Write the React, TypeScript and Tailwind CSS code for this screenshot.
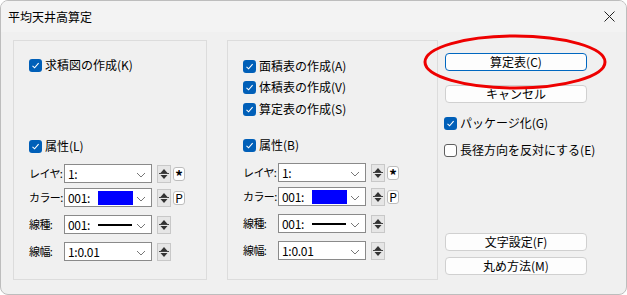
import React from 'react'

const font = { fontFamily: '"Noto Sans CJK JP", "Noto Sans", sans-serif' }

function Check({ checked = true, label }: { checked?: boolean; label: string }) {
  return (
    <div className="flex items-center gap-[3px] h-[18px]">
      {checked ? (
        <div className="w-[13px] h-[13px] rounded-[3px] bg-[#005fb8] flex items-center justify-center">
          <svg width="9" height="9" viewBox="0 0 9 9">
            <path d="M1.5 4.8 L3.6 6.8 L7.6 2.2" fill="none" stroke="#fff" strokeWidth="1.1" />
          </svg>
        </div>
      ) : (
        <div className="w-[13px] h-[13px] rounded-[3px] bg-white border border-[#5f5f5f]" />
      )}
      <span className="text-[12px] leading-none text-black whitespace-nowrap">{label}</span>
    </div>
  )
}

function Chevron() {
  return (
    <svg width="10" height="6" viewBox="0 0 10 6" className="absolute right-[5px] top-[7px]">
      <path d="M1 1 L5 5 L9 1" fill="none" stroke="#777" strokeWidth="1" />
    </svg>
  )
}

function Combo({ children }: { children: React.ReactNode }) {
  return (
    <div className="relative w-[88px] h-[19px] bg-white border border-[#8a8a8a] flex items-center pl-[3px] text-[12px] leading-none tracking-[-0.3px]">
      {children}
      <Chevron />
    </div>
  )
}

function Spinner() {
  return (
    <div className="ml-[5px] w-[14px] h-[18px] bg-[#e6e6e6] border border-[#c8c8c8] flex flex-col items-center justify-between py-[2px]">
      <svg width="8" height="5" viewBox="0 0 8 5">
        <path d="M0.5 5 L4 1 L7.5 5 Z" fill="#333" />
      </svg>
      <div className="w-[10px] h-px bg-[#444]" />
      <svg width="8" height="5" viewBox="0 0 8 5">
        <path d="M0.5 0 L4 4 L7.5 0 Z" fill="#333" />
      </svg>
    </div>
  )
}

function Mini({ ch }: { ch: string }) {
  return (
    <div className="ml-[2px] w-[12px] h-[14px] bg-white border border-[#bdbdbd] rounded-[3px] flex items-center justify-center text-[12px] leading-none">
      {ch === '*' ? <span className="text-[15px] font-bold leading-none mt-[4px]">*</span> : ch}
    </div>
  )
}

function Row({ label, children, extra, mt }: { label: string; children: React.ReactNode; extra?: string; mt: string }) {
  return (
    <div className={`flex items-center ${mt}`}>
      <span className="w-[35px] text-[11px] leading-none whitespace-nowrap tracking-[-0.6px]">{label}</span>
      <Combo>{children}</Combo>
      <Spinner />
      {extra && <Mini ch={extra} />}
    </div>
  )
}

function Attrs() {
  return (
    <>
      <Row label="レイヤ:" extra="*" mt="mt-[9px]">
        <span>1:</span>
      </Row>
      <Row label="カラー:" extra="P" mt="mt-[5px]">
        <span className="w-[30px]">001:</span>
        <div className="w-[35px] h-[14px] bg-[#0000ff]" />
      </Row>
      <Row label="線種:" mt="mt-[8px]">
        <span className="w-[30px]">001:</span>
        <div className="w-[34px] h-[2px] bg-black" />
      </Row>
      <Row label="線幅:" mt="mt-[8px]">
        <span>1:0.01</span>
      </Row>
    </>
  )
}

function Btn({ label, primary }: { label: string; primary?: boolean }) {
  return (
    <div
      className={`w-[142px] h-[18px] rounded-[4px] bg-[#fdfdfd] flex items-center justify-center text-[12px] leading-none ${
        primary ? 'border border-[#0067c0]' : 'border border-[#d0d0d0]'
      }`}
    >
      {label}
    </div>
  )
}

export default function App() {
  return (
    <div style={font} className="relative w-[627px] h-[295px] bg-white">
      <div className="w-[627px] h-[295px] rounded-[8px] border border-[#bdbdbd] overflow-hidden bg-[#f0f0f0] flex flex-col">
        <div className="h-[31px] bg-[#f3f3f3] flex items-center justify-between pl-[7px] pr-[11px] shrink-0">
          <span className="text-[12px] leading-none">平均天井高算定</span>
          <svg width="11" height="11" viewBox="0 0 11 11">
            <path d="M0.5 0.5 L10.5 10.5 M10.5 0.5 L0.5 10.5" stroke="#222" strokeWidth="1" />
          </svg>
        </div>
        <div className="flex pl-[12px] pt-[8px]">
          <div className="w-[194px] h-[240px] border border-[#dcdcdc] pl-[15px] pt-[15px] flex flex-col">
            <Check label="求積図の作成(K)" />
            <div className="mt-[63px]">
              <Check label="属性(L)" />
            </div>
            <Attrs />
          </div>
          <div className="ml-[20px] w-[211px] h-[240px] border border-[#dcdcdc] pl-[15px] pt-[16px] flex flex-col">
            <Check label="面積表の作成(A)" />
            <div className="mt-[3px]">
              <Check label="体積表の作成(V)" />
            </div>
            <div className="mt-[4px]">
              <Check label="算定表の作成(S)" />
            </div>
            <div className="mt-[18px]">
              <Check label="属性(B)" />
            </div>
            <Attrs />
          </div>
          <div className="ml-[7px] pt-[13px] flex flex-col">
            <Btn label="算定表(C)" primary />
            <div className="mt-[14px]">
              <Btn label="キャンセル" />
            </div>
            <div className="mt-[11px] -ml-[1px]">
              <Check label="パッケージ化(G)" />
            </div>
            <div className="mt-[9px] -ml-[1px]">
              <Check checked={false} label="長径方向を反対にする(E)" />
            </div>
            <div className="mt-[74px]">
              <Btn label="文字設定(F)" />
            </div>
            <div className="mt-[6px]">
              <Btn label="丸め方法(M)" />
            </div>
          </div>
        </div>
      </div>
      <svg className="absolute left-[422px] top-[33px]" width="186" height="58" viewBox="0 0 186 58">
        <ellipse cx="93" cy="29" rx="90" ry="26" fill="none" stroke="#ee0000" strokeWidth="3" />
      </svg>
    </div>
  )
}
